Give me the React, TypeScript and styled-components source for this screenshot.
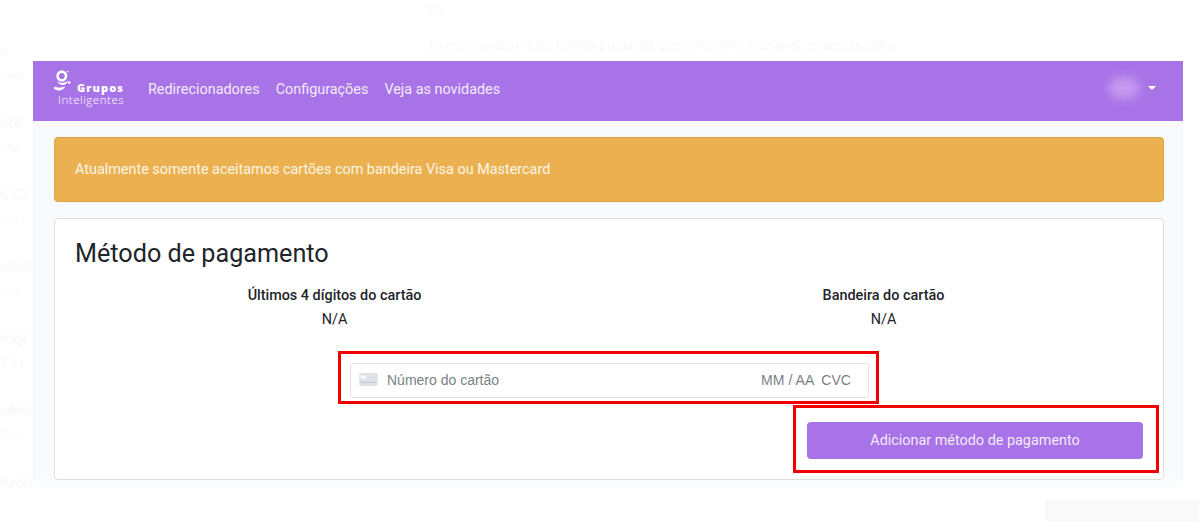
import React from 'react'
import styled, { createGlobalStyle } from 'styled-components'

const GlobalStyle = createGlobalStyle`
  html, body {
    margin: 0;
    padding: 0;
    background: #fff;
  }
  body {
    font-family: Roboto, "Liberation Sans", sans-serif;
    color: #212529;
  }
`

const backdropRows = [
  ['u', 'neté'],
  ['odi', 'Idui'],
  ['s Cr', 'ma i'],
  ['emili', 'ime.'],
  ['rogr', '5 31'],
  ['elimi', 'Sim'],
  ['ruoo', ''],
]

const App: React.FC = () => {
  return (
    <Page>
      <GlobalStyle />
      <BackdropChat>
        <span>Ok</span>
        <span>Tu esse andou mais cartão pq ainda que consumiu o chanel, e depois volta.</span>
      </BackdropChat>
      <BackdropList>
        {backdropRows.map(([title, sub]) => (
          <BackdropRow key={title}>
            <strong>{title}</strong>
            <span>{sub}</span>
          </BackdropRow>
        ))}
      </BackdropList>
      <BackdropCorner />

      <Window>
        <Navbar>
          <Brand>
            <BrandTop>
              <LogoMark viewBox="0 0 20 22" aria-hidden="true">
                <ellipse cx="7.8" cy="6" rx="4.2" ry="4.4" fill="none" stroke="#fff" strokeWidth="2.6" />
                <circle cx="13.6" cy="1.6" r="0.9" fill="#fff" />
                <circle cx="15.2" cy="12.6" r="1.4" fill="#fff" />
                <path d="M3 11.6 C 6 13.4, 10 13.4, 13.8 11 C 13 15.6, 6 16.6, 3 11.6 Z" fill="#fff" />
                <path d="M0 16.8 C 3.6 18, 7.4 18, 11.4 16.2 C 9 21, 3.4 21.4, 0 18.8 Z" fill="#fff" />
              </LogoMark>
              <BrandName>Grupos</BrandName>
            </BrandTop>
            <BrandSub>Inteligentes</BrandSub>
          </Brand>
          <NavLinks>
            <NavLink>Redirecionadores</NavLink>
            <NavLink>Configurações</NavLink>
            <NavLink>Veja as novidades</NavLink>
          </NavLinks>
          <UserMenu>
            <BlurredName />
            <Caret />
          </UserMenu>
        </Navbar>

        <Content>
          <Alert>Atualmente somente aceitamos cartões com bandeira Visa ou Mastercard</Alert>
          <Card>
            <Title>Método de pagamento</Title>
            <InfoGrid>
              <InfoCol>
                <InfoLabel>Últimos 4 dígitos do cartão</InfoLabel>
                <InfoValue>N/A</InfoValue>
              </InfoCol>
              <InfoCol>
                <InfoLabel>Bandeira do cartão</InfoLabel>
                <InfoValue>N/A</InfoValue>
              </InfoCol>
            </InfoGrid>

            <FieldFrame>
              <CardField>
                <CardIcon viewBox="0 0 20 14" aria-hidden="true">
                  <rect width="20" height="14" rx="1.5" fill="#dfe3e9" />
                  <rect x="1.5" y="2.5" width="6" height="4" rx="0.5" fill="#f6f7f9" />
                  <rect x="1.5" y="9.5" width="17" height="1.2" fill="#c3c9d2" />
                </CardIcon>
                <CardPlaceholder>Número do cartão</CardPlaceholder>
                <CardExtras>
                  <span>MM / AA</span>
                  <span>CVC</span>
                </CardExtras>
              </CardField>
            </FieldFrame>

            <ButtonFrame>
              <SubmitButton type="button">Adicionar método de pagamento</SubmitButton>
            </ButtonFrame>
          </Card>
        </Content>
      </Window>
    </Page>
  )
}

const Page = styled.div`
  position: relative;
  width: 1199px;
  height: 521px;
  overflow: hidden;
  padding: 61px 16px 0 33px;
  box-sizing: border-box;
  background: #fff;
`

const BackdropChat = styled.div`
  position: absolute;
  top: 2px;
  left: 427px;
  display: flex;
  flex-direction: column;
  gap: 19px;
  font-family: "Liberation Sans", sans-serif;
  font-size: 14px;
  line-height: 16px;
  color: #f8f8f9;
  filter: blur(0.7px);
`

const BackdropList = styled.div`
  position: absolute;
  top: 41px;
  left: 0;
  width: 33px;
  overflow: hidden;
  display: flex;
  flex-direction: column;
  gap: 28px;
  font-family: "Liberation Sans", sans-serif;
  color: #f5f5f7;
  filter: blur(0.8px);
`

const BackdropRow = styled.div`
  display: flex;
  flex-direction: column;
  height: 44px;
  gap: 4px;

  strong {
    font-size: 16px;
    line-height: 20px;
    font-weight: 400;
  }
  span {
    font-size: 13px;
    line-height: 20px;
    color: #f8f8f9;
  }
`

const BackdropCorner = styled.div`
  position: absolute;
  right: 0;
  bottom: 0;
  width: 154px;
  height: 21px;
  background: #f9f9f9;
`

const Window = styled.div`
  position: relative;
  width: 1150px;
  height: 431px;
  background: linear-gradient(#f8fafc 0 415px, #ffffff00 431px);
`

const Navbar = styled.nav`
  display: flex;
  align-items: center;
  height: 60px;
  padding: 0 27px 0 21px;
  box-sizing: border-box;
  background: #a973e8;
  color: #fff;
`

const Brand = styled.div`
  display: flex;
  flex-direction: column;
  width: 73px;
  margin-right: 21px;
  margin-bottom: 6px;
`

const BrandTop = styled.div`
  display: flex;
  align-items: flex-end;
  height: 22px;
  gap: 3px;
`

const LogoMark = styled.svg`
  width: 20px;
  height: 22px;
  flex: none;
`

const BrandName = styled.span`
  font-family: "Open Sans", sans-serif;
  font-size: 11px;
  font-weight: 800;
  letter-spacing: 1.1px;
  line-height: 9px;
  white-space: nowrap;
`

const BrandSub = styled.span`
  font-family: "Open Sans", sans-serif;
  font-size: 11.5px;
  font-weight: 300;
  line-height: 12px;
  letter-spacing: 0.55px;
  margin: 2px 0 0 4px;
  white-space: nowrap;
`

const NavLinks = styled.div`
  display: flex;
  gap: 16px;
  margin-bottom: 3px;
`

const NavLink = styled.a`
  font-size: 14.4px;
  line-height: 20px;
  color: rgba(255, 255, 255, 0.88);
  white-space: nowrap;
`

const UserMenu = styled.div`
  display: flex;
  align-items: center;
  margin-left: auto;
  margin-bottom: 7px;
  gap: 8px;
`

const BlurredName = styled.div`
  width: 32px;
  height: 22px;
  border-radius: 50%;
  background: rgba(205, 165, 240, 0.8);
  filter: blur(5px);
`

const Caret = styled.span`
  width: 0;
  height: 0;
  border-left: 4px solid transparent;
  border-right: 4px solid transparent;
  border-top: 4px solid #fff;
`

const Content = styled.main`
  display: flex;
  flex-direction: column;
  gap: 16px;
  padding: 16px 19px 0 21px;
`

const Alert = styled.div`
  display: flex;
  align-items: center;
  height: 65px;
  box-sizing: border-box;
  padding: 0 20px;
  background: #ebb150;
  border: 1px solid #d9a345;
  border-radius: 4px;
  font-size: 14.4px;
  color: #fdf6e6;
`

const Card = styled.section`
  height: 262px;
  box-sizing: border-box;
  padding: 20px 20px 0;
  background: #fff;
  border: 1px solid #dcdee0;
  border-radius: 4px;
`

const Title = styled.h2`
  margin: 0;
  font-family: Roboto, sans-serif;
  font-size: 25.2px;
  line-height: 29px;
  font-weight: 400;
  color: #212529;
`

const InfoGrid = styled.div`
  display: grid;
  grid-template-columns: 1fr 1fr;
  column-gap: 30px;
  margin-top: 17px;
`

const InfoCol = styled.div`
  display: flex;
  flex-direction: column;
  align-items: center;
  gap: 3px;
`

const InfoLabel = styled.strong`
  font-size: 14.4px;
  line-height: 21px;
  font-weight: 500;
  color: #212529;
`

const InfoValue = styled.span`
  font-size: 14.4px;
  line-height: 21px;
  color: #212529;
`

const FieldFrame = styled.div`
  width: 541px;
  height: 53px;
  box-sizing: border-box;
  margin: 21px 0 0 263px;
  padding: 9px 7px 0 9px;
  border: 3px solid #f00000;
`

const CardField = styled.div`
  display: flex;
  align-items: center;
  height: 35px;
  box-sizing: border-box;
  padding: 0 17px 2px 8px;
  background: #fff;
  border: 1px solid #dfe1e5;
  border-radius: 3px;
  font-family: "Liberation Sans", sans-serif;
  font-size: 14px;
  color: #7b7f85;
`

const CardIcon = styled.svg`
  width: 19px;
  height: 13px;
  flex: none;
  margin-right: 9px;
`

const CardPlaceholder = styled.span`
  flex: 1;
`

const CardExtras = styled.span`
  display: flex;
  gap: 7px;
  letter-spacing: 0.05px;
`

const ButtonFrame = styled.div`
  width: 366px;
  height: 68px;
  box-sizing: border-box;
  margin: 1px 0 0 718px;
  padding: 14px 13px 0 11px;
  border: 3px solid #f00000;
`

const SubmitButton = styled.button`
  display: block;
  width: 336px;
  height: 37px;
  padding: 0;
  border: 0;
  border-radius: 4px;
  background: #a973e8;
  color: rgba(255, 255, 255, 0.88);
  font-family: Roboto, sans-serif;
  font-size: 14.4px;
`

export default App
